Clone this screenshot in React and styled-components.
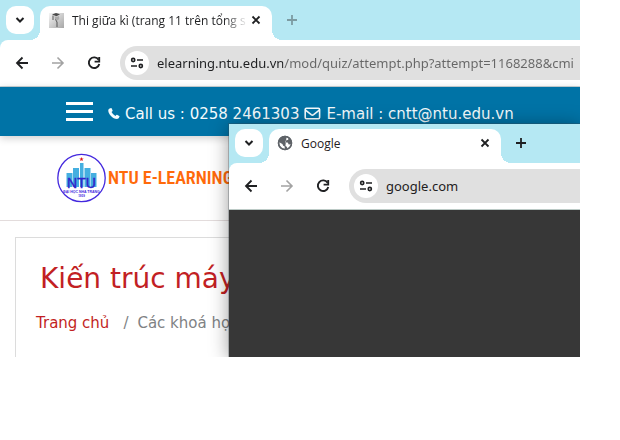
import React from "react";
import styled, { createGlobalStyle, css } from "styled-components";

const GlobalStyle = createGlobalStyle`
  *, *::before, *::after { box-sizing: border-box; }
  body { margin: 0; background: #fff; }
  button { border: 0; padding: 0; background: none; color: inherit; font: inherit; }
  h1, ol { margin: 0; padding: 0; font-weight: 400; }
  svg { display: block; flex: none; }
`;

const uiFont = '"Open Sans", "Noto Sans", sans-serif';
const siteFont = '"DejaVu Sans", sans-serif';

const Desktop = styled.main`
  position: relative;
  overflow: hidden;
  margin-right: 40px;
  background: #fff;
`;

const BrowserFrame = styled.section`
  font-family: ${uiFont};
  background: #fff;
`;

const FloatingWindow = styled(BrowserFrame)`
  position: absolute;
  top: 124px;
  right: 0;
  bottom: 0;
  left: 229px;
  display: flex;
  flex-direction: column;
  box-shadow: 0 0 0 1px rgba(60, 70, 75, 0.3), 0 2px 18px rgba(0, 0, 0, 0.4);
`;

const TabStrip = styled.header`
  display: flex;
  padding: ${(p) => (p.$compact ? 5 : 6)}px 0 0 6px;
  background: #b5e8f3;
`;

const TabSearch = styled.button`
  display: grid;
  place-items: center;
  width: 28px;
  height: 28px;
  margin-right: 6px;
  border-radius: 10px;
  background: #fff;
  color: #1f2022;
`;

const Tab = styled.div`
  position: relative;
  display: flex;
  align-items: center;
  width: 232px;
  height: 34px;
  padding: 0 8px;
  border-radius: 10px 10px 0 0;
  background: #fff;
  color: #1f2022;
  font-size: 12px;
  line-height: 16px;

  &::before,
  &::after {
    content: "";
    position: absolute;
    bottom: 0;
    width: 10px;
    height: 10px;
  }
  &::before {
    right: 100%;
    background: radial-gradient(circle at 0 0, transparent 10px, #fff 10px);
  }
  &::after {
    left: 100%;
    background: radial-gradient(circle at 100% 0, transparent 10px, #fff 10px);
  }
`;

const TabTitle = styled.span`
  flex: 1;
  min-width: 0;
  margin: 0 0 5px 8px;
  overflow: hidden;
  white-space: nowrap;
  ${(p) =>
    p.$fade &&
    css`
      mask-image: linear-gradient(90deg, #000 152px, transparent 176px);
    `}
`;

const IconButton = styled.button`
  display: grid;
  place-items: center;
  width: ${(p) => p.$size || 28}px;
  height: ${(p) => p.$size || 28}px;
  color: ${(p) => (p.$muted ? "#a3a3a3" : "#1f2022")};
`;

const TabIcon = styled.span`
  margin-bottom: 6px;
`;

const CloseTab = styled(IconButton)`
  margin-bottom: 6px;
`;

const NewTab = styled(IconButton)`
  margin-left: 6px;
  color: ${(p) => (p.$muted ? "#7c9ba2" : "#1f2022")};
`;

const ToolbarBack = styled.div`
  background: #b5e8f3;
`;

const Toolbar = styled.div`
  display: flex;
  align-items: center;
  gap: 8px;
  height: 47px;
  padding: 0 0 1px 8px;
  border-bottom: 1px solid ${(p) => (p.$line || "#c9d3d6")};
  border-top-left-radius: 8px;
  background: #fff;
`;

const AddressBar = styled.label`
  display: flex;
  align-items: center;
  flex: 1;
  min-width: 0;
  height: 34px;
  margin-left: 4px;
  padding-left: 5px;
  gap: 8px;
  border-radius: 17px 0 0 17px;
  background: #e0e0e0;
`;

const SiteInfo = styled.span`
  display: grid;
  place-items: center;
  flex: none;
  width: 24px;
  height: 24px;
  border-radius: 50%;
  background: #fff;
  color: #1f2022;
`;

const AddressInput = styled.input`
  flex: 1;
  min-width: 0;
  height: 24px;
  padding: 0;
  border: 0;
  outline: 0;
  background: none;
  color: #1f2022;
  font: 13px/20px "Noto Sans", sans-serif;
  ${(p) =>
    p.$hostWidth &&
    css`
      color: #666;
      background: linear-gradient(90deg, #1f2022 ${p.$hostWidth}px, #666 ${p.$hostWidth}px);
      background-clip: text;
      -webkit-text-fill-color: transparent;
    `}
`;

const ContactBar = styled.nav`
  position: relative;
  display: flex;
  align-items: center;
  height: 49px;
  padding-left: 66px;
  background: #0073a6;
  color: #f4fbfd;
  box-shadow: 0 2px 8px rgba(0, 0, 0, 0.2);
`;

const MenuButton = styled.button`
  display: flex;
  flex-direction: column;
  gap: 5px;
  width: 27px;
  margin-right: 15px;
`;

const MenuBar = styled.span`
  height: 3px;
  background: #fff;
`;

const ContactText = styled.p`
  display: flex;
  align-items: center;
  gap: 5px;
  margin: 4px 0 0;
  font: 15px/20px ${siteFont};
  white-space: nowrap;
`;

const Brand = styled.header`
  display: flex;
  align-items: center;
  height: 85px;
  padding-left: 57px;
  gap: 2px;
  border-bottom: 1px solid #e3dcdc;
`;

const BrandName = styled.span`
  color: #ff6a0a;
  font: 600 18px/24px "Liberation Sans Narrow", "Roboto Condensed", Roboto, sans-serif;
  white-space: nowrap;
`;

const CourseCard = styled.section`
  margin: 16px 0 0 15px;
  padding: 23px 0 23px 20px;
  border: 1px solid #dcdcdc;
  border-width: 1px 0 0 1px;
  font-family: ${siteFont};
`;

const CourseTitle = styled.h1`
  padding-left: 4px;
  color: #c21f24;
  font-size: 28px;
  line-height: 36px;
  white-space: nowrap;
`;

const Breadcrumb = styled.ol`
  display: flex;
  margin-top: 15px;
  list-style: none;
  color: #808284;
  font-size: 15px;
  line-height: 22px;
  white-space: nowrap;
`;

const Crumb = styled.li`
  & + &::before {
    content: "/";
    padding: 0 9px 0 14px;
  }
`;

const CrumbLink = styled.a`
  color: ${(p) => (p.$active ? "#c21f24" : "inherit")};
  text-decoration: none;
`;

const EmptyPage = styled.div`
  flex: 1;
  background: #373737;
`;

const Stroke = ({ size, d, width = 2 }) => (
  <svg width={size} height={size} viewBox={`0 0 ${size} ${size}`} fill="none" stroke="currentColor" strokeWidth={width} aria-hidden="true">
    <path d={d} />
  </svg>
);

const TuneIcon = () => (
  <svg width="14" height="14" viewBox="0 0 14 14" fill="none" stroke="currentColor" strokeWidth="1.6" aria-hidden="true">
    <circle cx="3.2" cy="4" r="1.6" />
    <path d="M7 4h6M1 10h6" />
    <circle cx="10.8" cy="10" r="1.6" />
  </svg>
);

const ReloadIcon = () => (
  <svg width="16" height="16" viewBox="0 0 16 16" fill="none" stroke="currentColor" strokeWidth="1.9" aria-hidden="true">
    <path d="M12.6 4.8A5.3 5.3 0 1 0 13.3 9" />
    <path d="M13.2 2v4.6H8.6" />
  </svg>
);

const GlobeIcon = () => (
  <svg width="16" height="16" viewBox="0 0 16 16" aria-hidden="true">
    <circle cx="8" cy="8" r="7.2" fill="#5f6368" />
    <path d="M9.500 2.200 11.500 3l-.3 1.800-2.400.8-.5 1.900 2.400.1 1.100 1.800 2.400-.1-1 2.400-2.200 2-1 .2.100-2-1.600-.8V9.900" fill="#fff" />
    <path d="M2.200 7.200 5.400 9l.8 1.800 1.500.7v2.600l-2.700-.8-2.400-2.700z" fill="#fff" />
    <circle cx="8" cy="8" r="6.500" fill="none" stroke="#5f6368" strokeWidth="1.500" />
  </svg>
);

const GraduateIcon = () => (
  <svg width="16" height="16" viewBox="0 0 16 16" aria-hidden="true">
    <defs>
      <linearGradient id="tile" x1="0" y1="0" x2="1" y2="1">
        <stop offset="0" stopColor="#f5f5f5" />
        <stop offset="1" stopColor="#a6a6a6" />
      </linearGradient>
    </defs>
    <rect x="1" y="1" width="15" height="15" fill="url(#tile)" />
    <path d="m4 2.500 4-1.500 4 1.200-3.500 2z" fill="#4b4b4b" />
    <path d="M6.500 4 8.500 5l2.500-1 .3 3-2 1.500-2.300-1z" fill="#aaa" />
    <path d="M5 3.500v4.500M7.500 7.500 9 10v5" stroke="#555" fill="none" />
  </svg>
);

const PhoneIcon = () => (
  <svg width="12" height="13" viewBox="0 0 13 13" fill="currentColor" aria-hidden="true">
    <path d="M1.200 1.300 3.300.500q.4-.1.600.4L5 3.200q.2.400-.2.800L3.800 5q1.400 2.700 4.200 4.200l1-1.100q.4-.4.800-.2l2.400 1.200q.5.300.3.700-.5 2.500-2.700 2.700C5 12.500.3 7.200.3 3.300q0-1.400.9-2z" />
  </svg>
);

const MailIcon = () => (
  <svg width="17" height="13" viewBox="0 0 17 13" fill="none" stroke="currentColor" strokeWidth="1.600" aria-hidden="true">
    <rect x="1.200" y="1.200" width="14.400" height="10.600" rx="1.200" />
    <path d="m1.500 3.200 5.700 4.500q1.200.9 2.400 0l5.700-4.500" />
  </svg>
);

const UniversityLogo = () => (
  <svg width="49" height="50" viewBox="0 0 49 50" role="img" aria-label="Đại học Nha Trang">
    <circle cx="24.500" cy="25" r="23.700" fill="#fff" stroke="#4328de" strokeWidth="1.300" />
    <path d="M9.500 20h6v14h-6zM16 15h6v19h-6zM23 10h3.500v24H23zM27.500 15h6v19h-6zM34 20h5.500v14H34z" fill="#45afe0" />
    <path d="m24.500 4 .6 1.500h1.600l-1.300 1 .5 1.600-1.400-.9-1.400.9.5-1.600-1.300-1h1.600z" fill="#e1191c" />
    <text x="24.500" y="35" textAnchor="middle" fontFamily="Liberation Sans, sans-serif" fontSize="14" stroke="#3022ca" strokeWidth="0.400" fill="#3022ca">NTU</text>
    <text x="24.500" y="40" textAnchor="middle" fontFamily="Liberation Sans, sans-serif" fontWeight="700" fontSize="3.500" fill="#4328de">ĐẠI HỌC NHA TRANG</text>
    <text x="24.500" y="44" textAnchor="middle" fontFamily="Liberation Sans, sans-serif" fontWeight="700" fontSize="3" fill="#4328de">1959</text>
  </svg>
);

function Chrome({ title, icon, url, hostWidth, inactive, line }) {
  return (
    <>
      <TabStrip $compact={!inactive}>
        <TabSearch aria-label="Search tabs"><Stroke size={10} d="M1.500 3 5 6.500 8.500 3" /></TabSearch>
        <Tab>
          <TabIcon>{icon}</TabIcon>
          <TabTitle $fade={inactive}>{title}</TabTitle>
          <CloseTab $size={16} aria-label="Close tab"><Stroke size={10} d="m1.500 1.500 7 7m0-7-7 7" width={1.800} /></CloseTab>
        </Tab>
        <NewTab $muted={inactive} aria-label="New tab"><Stroke size={12} d="M6 1v10M1 6h10" width={1.800} /></NewTab>
      </TabStrip>
      <ToolbarBack>
        <Toolbar $line={line}>
          <IconButton aria-label="Back"><Stroke size={14} d="M13 7H2m5.500-5.500L2 7l5.500 5.500" width={1.800} /></IconButton>
          <IconButton $muted aria-label="Forward"><Stroke size={14} d="M1 7h11M6.500 1.500 12 7l-5.500 5.500" width={1.600} /></IconButton>
          <IconButton aria-label="Reload"><ReloadIcon /></IconButton>
          <AddressBar>
            <SiteInfo><TuneIcon /></SiteInfo>
            <AddressInput aria-label="Address" defaultValue={url} $hostWidth={hostWidth} spellCheck={false} />
          </AddressBar>
        </Toolbar>
      </ToolbarBack>
    </>
  );
}

export default function App() {
  return (
    <>
      <GlobalStyle />
      <Desktop>
        <BrowserFrame>
          <Chrome
            inactive
            title="Thi giữa kì (trang 11 trên tổng s"
            icon={<GraduateIcon />}
            url="elearning.ntu.edu.vn/mod/quiz/attempt.php?attempt=1168288&cmi"
            hostWidth={126}
          />
          <ContactBar>
            <MenuButton aria-label="Menu"><MenuBar /><MenuBar /><MenuBar /></MenuButton>
            <ContactText>
              <PhoneIcon />
              <span>Call us : 0258 2461303</span>
              <MailIcon />
              <span>E-mail : cntt@ntu.edu.vn</span>
            </ContactText>
          </ContactBar>
          <Brand>
            <UniversityLogo />
            <BrandName>NTU E-LEARNING</BrandName>
          </Brand>
          <CourseCard>
            <CourseTitle>Kiến trúc máy</CourseTitle>
            <Breadcrumb>
              <Crumb><CrumbLink href="#home" $active>Trang chủ</CrumbLink></Crumb>
              <Crumb><CrumbLink href="#courses">Các khoá họ</CrumbLink></Crumb>
            </Breadcrumb>
          </CourseCard>
        </BrowserFrame>
        <FloatingWindow>
          <Chrome title="Google" icon={<GlobeIcon />} url="google.com" line="#bccac6" />
          <EmptyPage />
        </FloatingWindow>
      </Desktop>
    </>
  );
}
